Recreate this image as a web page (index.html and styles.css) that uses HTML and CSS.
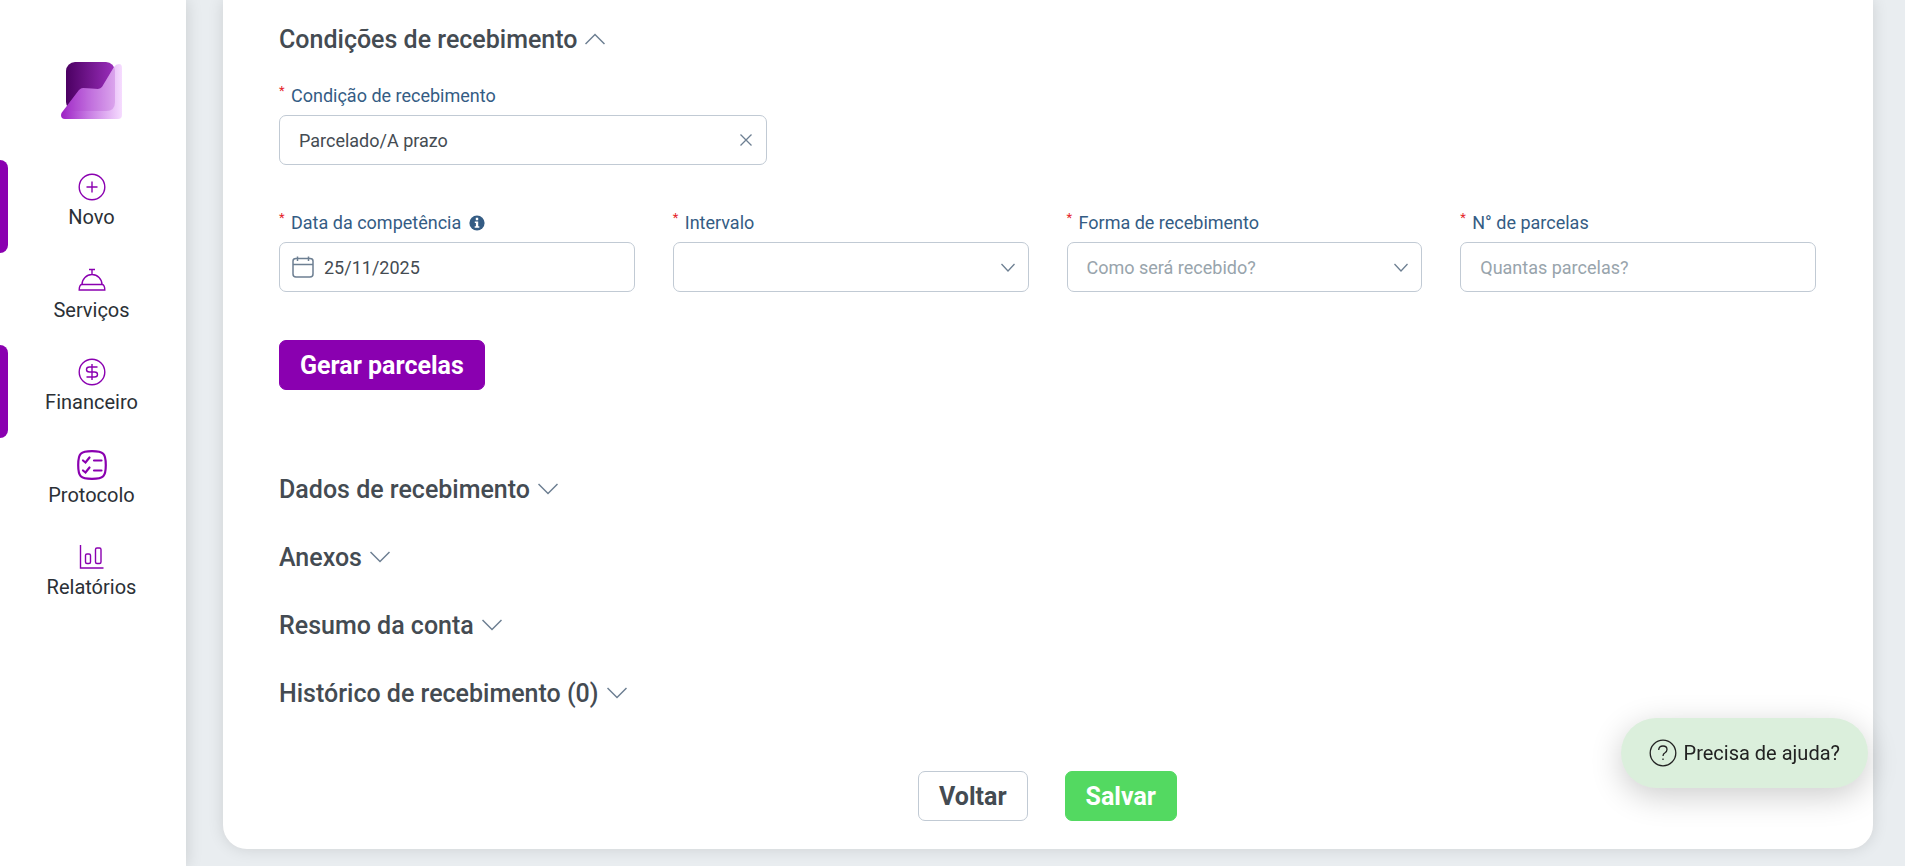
FILE: index.html
```html
<!DOCTYPE html>
<html lang="pt-BR">
<head>
  <meta charset="UTF-8">
  <meta name="viewport" content="width=device-width, initial-scale=1.0">
  <title>Contas a receber</title>
  <link rel="stylesheet" href="styles.css">
</head>
<body>
  <div class="layout">
    <aside class="sidebar">
      <a href="#" class="logo" aria-label="Início">
        <svg width="62" height="58" viewBox="0 0 62 58">
          <defs>
            <linearGradient id="logo-dark" x1="0" y1="0" x2="1" y2="0">
              <stop offset="0" stop-color="#4b0062"/>
              <stop offset="1" stop-color="#9c2fbd"/>
            </linearGradient>
            <linearGradient id="logo-light" x1="0" y1="0" x2="1" y2="0">
              <stop offset="0" stop-color="#9c1fc4"/>
              <stop offset="0.45" stop-color="#c77be3"/>
              <stop offset="1" stop-color="#f6dcff"/>
            </linearGradient>
          </defs>
          <rect x="5" y="0" width="49" height="49" rx="9" fill="url(#logo-dark)"/>
          <path d="M53 5Q55 2 58 2Q61 2 61 6V53Q61 57 57 57H4Q0 57 0 53Q0 51 2 49L18 28Q20 26 22 26L37 27Q39 27 41 25Z" fill="url(#logo-light)"/>
          <path d="M53 5Q54 7 54 9V40Q54 49 45 49H14Q9 49 6 44L18 28Q20 26 22 26L37 27Q39 27 41 25Z" fill="#a63cc6" opacity="0.25"/>
        </svg>
      </a>
      <nav class="menu">
        <a href="#" class="menu-item active">
          <svg class="menu-icon" viewBox="0 0 30 30">
            <circle cx="15" cy="15" r="12.8"/>
            <path d="M15 9.500V20.500M9.500 15H20.500"/>
          </svg>
          <span>Novo</span>
        </a>
        <a href="#" class="menu-item">
          <svg class="menu-icon" viewBox="0 0 30 30">
            <path d="M12 4.500H18M15 4.500V9.500M5 19.500A10 10 0 0 1 25 19.500M4.500 19.500H25.500Q27.800 20.500 27.800 25H2.200Q2.200 20.500 4.500 19.500Z"/>
          </svg>
          <span>Serviços</span>
        </a>
        <a href="#" class="menu-item active">
          <svg class="menu-icon" viewBox="0 0 30 30">
            <circle cx="15" cy="15" r="12.8"/>
            <path d="M15 7V23M20.500 10H12.500Q9.500 10 9.500 12.500Q9.500 15 12.500 15H17.500Q20.500 15 20.500 17.500Q20.500 20 17.500 20H9.500"/>
          </svg>
          <span>Financeiro</span>
        </a>
        <a href="#" class="menu-item">
          <svg class="menu-icon menu-icon-bold" viewBox="0 0 30 30">
            <path d="M15 1.200C26.500 1.200 28.800 3.500 28.800 15S26.500 28.800 15 28.800S1.200 26.500 1.200 15S3.500 1.200 15 1.200Z"/>
            <path d="M6 10.500L8.500 12.500L12.500 7.500M17 10.500H24.500M6 20.500L8.500 22.500L12.500 17.500M17 20.500H24.500"/>
          </svg>
          <span>Protocolo</span>
        </a>
        <a href="#" class="menu-item">
          <svg class="menu-icon" viewBox="0 0 30 30">
            <path d="M3.500 3V26H26.500"/>
            <rect x="8.500" y="12" width="5" height="9.500" rx="1.500"/>
            <rect x="18.500" y="6" width="5.500" height="15.500" rx="1.500"/>
          </svg>
          <span>Relatórios</span>
        </a>
      </nav>
    </aside>

    <main class="content">
      <form class="card">
        <section class="conditions">
          <h2 class="section-title">
            <button type="button" class="toggle" aria-expanded="true">
              Condições de recebimento
              <svg class="chevron" viewBox="0 0 20 12"><path d="M0.500 11L10 1.500L19.500 11"/></svg>
            </button>
          </h2>

          <div class="field field-condition">
            <label for="condicao"><span class="required">*</span>Condição de recebimento</label>
            <div class="control">
              <input type="text" id="condicao" value="Parcelado/A prazo">
              <button type="button" class="clear" aria-label="Limpar">
                <svg width="12" height="12" viewBox="0 0 12 12"><path d="M0.500 0.500L11.500 11.500M11.500 0.500L0.500 11.500"/></svg>
              </button>
            </div>
          </div>

          <div class="field-row">
            <div class="field">
              <label for="competencia"><span class="required">*</span>Data da competência
                <svg class="info" viewBox="0 0 16 16">
                  <circle cx="8" cy="8" r="7.600" fill="#345c84"/>
                  <path d="M6.800 2.800H9.200V5.200H6.800ZM5.800 6.500H9.200V11.200H10.300V12.800H5.700V11.200H6.900V8H5.800Z" fill="#fff"/>
                </svg>
              </label>
              <div class="control control-date">
                <svg width="22" height="22" viewBox="0 0 22 22"><path d="M4 2.500H18Q21 2.500 21 5V18Q21 21 18 21H4Q1 21 1 18V5Q1 2.500 4 2.500ZM1 8.500H21M5.500 0.500V5M16.500 0.500V5"/></svg>
                <input type="text" id="competencia" value="25/11/2025">
              </div>
            </div>
            <div class="field">
              <label for="intervalo"><span class="required">*</span>Intervalo</label>
              <div class="control">
                <select id="intervalo">
                  <option value=""></option>
                </select>
                <svg class="arrow" viewBox="0 0 14 9"><path d="M0.500 1L7 8L13.500 1"/></svg>
              </div>
            </div>
            <div class="field">
              <label for="forma"><span class="required">*</span>Forma de recebimento</label>
              <div class="control">
                <select id="forma" class="empty">
                  <option value="">Como será recebido?</option>
                </select>
                <svg class="arrow" viewBox="0 0 14 9"><path d="M0.500 1L7 8L13.500 1"/></svg>
              </div>
            </div>
            <div class="field">
              <label for="parcelas"><span class="required">*</span>N° de parcelas</label>
              <div class="control">
                <input type="text" id="parcelas" placeholder="Quantas parcelas?">
              </div>
            </div>
          </div>

          <button type="button" class="btn btn-primary">Gerar parcelas</button>
        </section>

        <h2 class="section-title">
          <button type="button" class="toggle" aria-expanded="false">
            Dados de recebimento
            <svg class="chevron" viewBox="0 0 20 12"><path d="M0.500 1L10 10.500L19.500 1"/></svg>
          </button>
        </h2>
        <h2 class="section-title">
          <button type="button" class="toggle" aria-expanded="false">
            Anexos
            <svg class="chevron" viewBox="0 0 20 12"><path d="M0.500 1L10 10.500L19.500 1"/></svg>
          </button>
        </h2>
        <h2 class="section-title">
          <button type="button" class="toggle" aria-expanded="false">
            Resumo da conta
            <svg class="chevron" viewBox="0 0 20 12"><path d="M0.500 1L10 10.500L19.500 1"/></svg>
          </button>
        </h2>
        <h2 class="section-title">
          <button type="button" class="toggle" aria-expanded="false">
            Histórico de recebimento (0)
            <svg class="chevron" viewBox="0 0 20 12"><path d="M0.500 1L10 10.500L19.500 1"/></svg>
          </button>
        </h2>

        <div class="actions">
          <button type="button" class="btn btn-outline">Voltar</button>
          <button type="submit" class="btn btn-success">Salvar</button>
        </div>
      </form>
    </main>
  </div>

  <button type="button" class="help">
    <svg width="28" height="28" viewBox="0 0 28 28">
      <circle cx="14" cy="14" r="12.8"/>
      <path d="M9.700 11Q9.700 7 14 7Q18 7 18 10.500Q18 12.500 16 13.700Q14 14.800 14 17"/>
      <path d="M14 19.500V21"/>
    </svg>
    Precisa de ajuda?
  </button>
</body>
</html>
```

FILE: styles.css
```css
* {
  box-sizing: border-box;
}

body {
  margin: 0;
  font-family: Roboto, sans-serif;
  font-size: 18px;
  color: #444b52;
  background: #e9edf0;
}

input, select, button {
  font-family: inherit;
  font-size: inherit;
  color: inherit;
}

button {
  cursor: pointer;
}

svg {
  flex-shrink: 0;
  fill: none;
}

.layout {
  display: flex;
  min-height: 100vh;
}

/* Sidebar */

.sidebar {
  flex: 0 0 186px;
  padding-top: 62px;
  background: #fff;
  box-shadow: 0 0 16px rgba(0, 0, 0, 0.14);
}

.logo {
  display: block;
  width: 64px;
  height: 58px;
  margin: 0 auto 40px;
}

.menu {
  display: grid;
  grid-auto-rows: 1fr;
  height: 463px;
}

.menu-item {
  display: flex;
  flex-direction: column;
  align-items: center;
  position: relative;
  padding: 12px 8px 0 5px;
  font-size: 20px;
  line-height: 31px;
  color: #2b3036;
  text-decoration: none;
}

.menu-item.active::before {
  content: "";
  position: absolute;
  top: 0;
  left: 0;
  width: 8px;
  height: 100%;
  background: #8a00b0;
  border-radius: 0 8px 8px 0;
}

.menu-icon {
  width: 30px;
  height: 30px;
  stroke: #8a00b0;
  stroke-width: 1.4;
}

.menu-icon-bold {
  stroke-width: 2.2;
  stroke-linecap: round;
}

/* Form card */

.content {
  flex: 1;
  min-width: 0;
  padding: 0 32px 18px 37px;
}

.card {
  padding: 5px 57px 28px 56px;
  background: #fff;
  border-radius: 0 0 24px 24px;
  box-shadow: 0 0 16px rgba(0, 0, 0, 0.12);
}

.conditions {
  margin-bottom: 65px;
}

.section-title {
  margin: 0;
  font-size: 25px;
  font-weight: 500;
}

.toggle {
  display: flex;
  align-items: center;
  gap: 8px;
  height: 68px;
  padding: 0;
  border: 0;
  background: none;
  font-weight: 500;
}

.chevron {
  width: 20px;
  height: 12px;
  stroke: #6d7f92;
  stroke-width: 1.5;
}

.field label {
  display: flex;
  align-items: center;
  height: 39px;
  color: #345c84;
}

.required {
  align-self: flex-start;
  width: 12px;
  margin-top: 7px;
  font-size: 13px;
  color: #e5252a;
}

.info {
  width: 16px;
  height: 16px;
  margin-left: 8px;
}

.control {
  display: flex;
  align-items: center;
  position: relative;
  height: 50px;
  border: 1px solid #c1cad4;
  border-radius: 7px;
}

.control input, .control select {
  flex: 1;
  min-width: 0;
  height: 100%;
  padding: 0 19px;
  border: 0;
  outline: 0;
  background: none;
  appearance: none;
}

.control input::placeholder, .control .empty {
  color: #98a4ac;
  opacity: 1;
}

.control-date {
  padding-left: 12px;
}

.control-date svg {
  stroke: #6d7f92;
  stroke-width: 1.5;
}

.control-date input {
  padding: 0 10px;
}

.clear {
  display: flex;
  padding: 14px;
  border: 0;
  background: none;
  stroke: #6d7f92;
  stroke-width: 1.3;
}

/* drawn over the select so the whole box stays clickable */
.arrow {
  position: absolute;
  right: 13px;
  width: 14px;
  height: 9px;
  stroke: #6d7f92;
  stroke-width: 1.3;
  pointer-events: none;
}

.field-condition {
  max-width: 488px;
  margin-top: 3px;
}

.field-row {
  display: grid;
  grid-template-columns: repeat(4, 1fr);
  gap: 38px;
  margin: 38px 0 48px;
}

.btn {
  height: 50px;
  padding: 0 20px;
  border: 1px solid transparent;
  border-radius: 7px;
  font-size: 25px;
  font-weight: 700;
}

.btn-primary {
  background: #8a00b0;
  border-color: #8a00b0;
  color: #fff;
}

.btn-outline {
  background: #fff;
  border-color: #c1cad4;
}

.btn-success {
  background: #53d961;
  border-color: #53d961;
  color: #fff;
}

.actions {
  display: flex;
  justify-content: center;
  gap: 37px;
  margin-top: 44px;
}

/* Floating help button */

.help {
  display: flex;
  align-items: center;
  gap: 7px;
  position: fixed;
  right: 37px;
  bottom: 78px;
  height: 70px;
  padding: 0 28px;
  border: 0;
  border-radius: 35px;
  background: #dbefdc;
  box-shadow: 0 8px 32px rgba(0, 0, 0, 0.2);
  font-size: 20px;
  color: #222;
  stroke-width: 1.3;
}

.help svg {
  stroke: #222;
}
```
